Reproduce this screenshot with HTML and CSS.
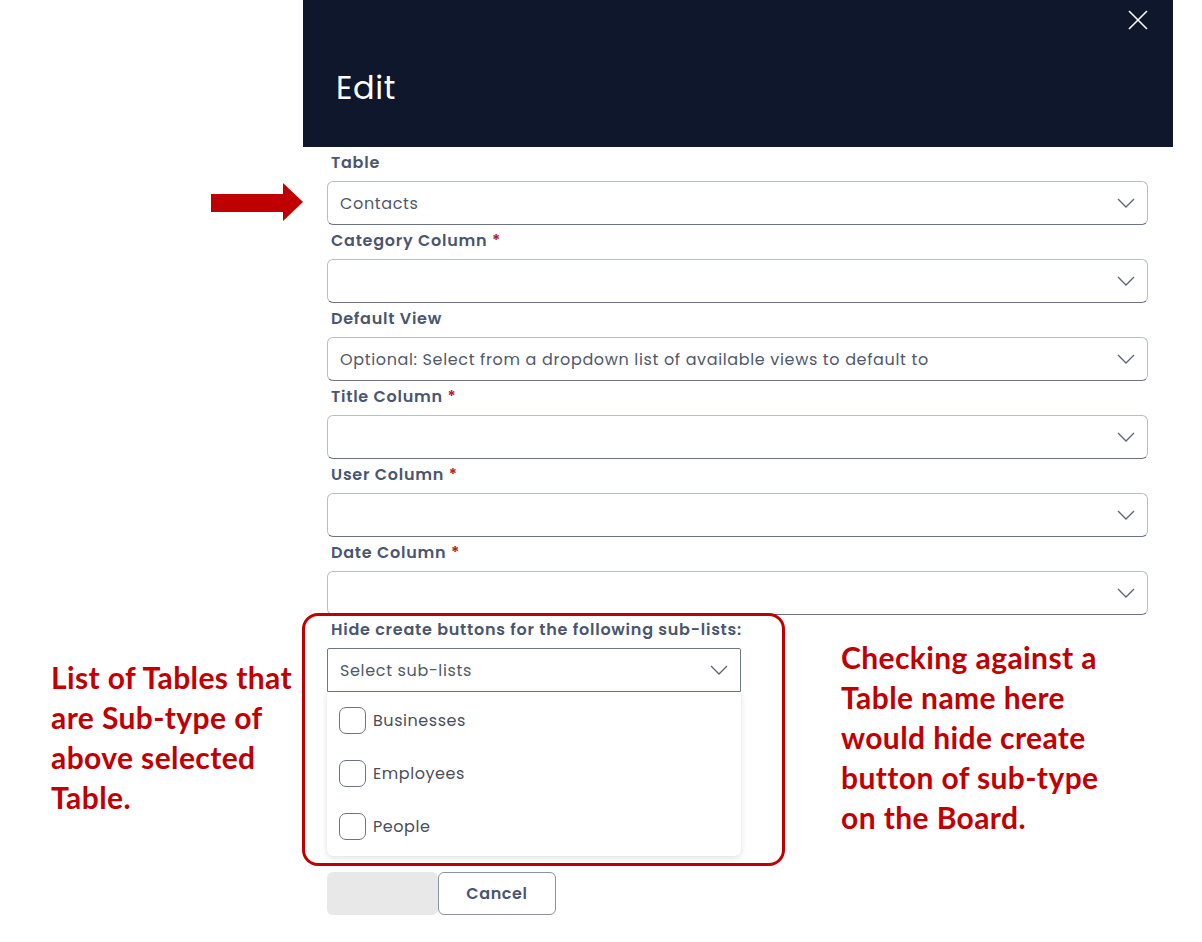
FILE: index.html
```html
<!DOCTYPE html>
<html>
<head>
<meta charset="utf-8">
<link rel="stylesheet" href="styles.css">
</head>
<body>
<div class="page">
  <div class="gutter">
    <div class="arrow"><span class="shaft"></span><span class="head"></span></div>
    <div class="note note-left">List of Tables that<br>are Sub-type of<br>above selected<br>Table.</div>
  </div>
  <div class="drawer">
    <header class="drawer-head">
      <h1 class="title">Edit</h1>
      <button class="close" aria-label="Close">
        <svg width="20" height="20" viewBox="0 0 20 20"><path d="M1 1 L19 19 M19 1 L1 19" stroke="#ffffff" stroke-width="1.6" fill="none"/></svg>
      </button>
    </header>
    <div class="drawer-body">
      <div class="field">
        <label class="label">Table</label>
        <div class="select"><span class="value">Contacts</span><svg class="chev" width="18" height="10" viewBox="0 0 18 10"><path d="M1 1 L9 9 L17 1" stroke="#5b6478" stroke-width="1.3" fill="none"/></svg></div>
      </div>
      <div class="field">
        <label class="label">Category Column <span class="req">*</span></label>
        <div class="select"><span class="value"></span><svg class="chev" width="18" height="10" viewBox="0 0 18 10"><path d="M1 1 L9 9 L17 1" stroke="#5b6478" stroke-width="1.3" fill="none"/></svg></div>
      </div>
      <div class="field">
        <label class="label">Default View</label>
        <div class="select"><span class="value">Optional: Select from a dropdown list of available views to default to</span><svg class="chev" width="18" height="10" viewBox="0 0 18 10"><path d="M1 1 L9 9 L17 1" stroke="#5b6478" stroke-width="1.3" fill="none"/></svg></div>
      </div>
      <div class="field">
        <label class="label">Title Column <span class="req">*</span></label>
        <div class="select"><span class="value"></span><svg class="chev" width="18" height="10" viewBox="0 0 18 10"><path d="M1 1 L9 9 L17 1" stroke="#5b6478" stroke-width="1.3" fill="none"/></svg></div>
      </div>
      <div class="field">
        <label class="label">User Column <span class="req">*</span></label>
        <div class="select"><span class="value"></span><svg class="chev" width="18" height="10" viewBox="0 0 18 10"><path d="M1 1 L9 9 L17 1" stroke="#5b6478" stroke-width="1.3" fill="none"/></svg></div>
      </div>
      <div class="field">
        <label class="label">Date Column <span class="req">*</span></label>
        <div class="select"><span class="value"></span><svg class="chev" width="18" height="10" viewBox="0 0 18 10"><path d="M1 1 L9 9 L17 1" stroke="#5b6478" stroke-width="1.3" fill="none"/></svg></div>
      </div>
      <div class="field field-sub">
        <div class="highlight"></div>
        <label class="label">Hide create buttons for the following sub-lists:</label>
        <div class="select select-open"><span class="value">Select sub-lists</span><svg class="chev" width="18" height="10" viewBox="0 0 18 10"><path d="M1 1 L9 9 L17 1" stroke="#5b6478" stroke-width="1.3" fill="none"/></svg></div>
        <ul class="menu">
          <li class="opt"><span class="box"></span>Businesses</li>
          <li class="opt"><span class="box"></span>Employees</li>
          <li class="opt"><span class="box"></span>People</li>
        </ul>
      </div>
      <div class="actions">
        <button class="btn btn-save"></button>
        <button class="btn btn-cancel">Cancel</button>
      </div>
    </div>
  </div>
  <div class="note note-right">Checking against a<br>Table name here<br>would hide create<br>button of sub-type<br>on the Board.</div>
</div>
</body>
</html>
```
FILE: styles.css
```css
* { box-sizing: border-box; }
html, body { margin: 0; padding: 0; background: #ffffff; }
body { font-family: "Poppins", "Open Sans", "Noto Sans", sans-serif; width: 1202px; height: 942px; overflow: hidden; }

.page { position: relative; display: flex; width: 1202px; height: 942px; }
.gutter { width: 303px; flex: none; position: relative; }
.drawer { width: 870px; flex: none; }

.arrow { position: absolute; left: 210px; top: 183px; width: 93px; height: 39px; }
.arrow .shaft { position: absolute; left: 1px; top: 11px; width: 74px; height: 18px; background: #c00000; }
.arrow .head { position: absolute; left: 73px; top: 0; width: 0; height: 0; border-top: 19.5px solid transparent; border-bottom: 19.5px solid transparent; border-left: 20px solid #c00000; }

.note { position: absolute; font-family: "Lato", "Open Sans", sans-serif; font-weight: 700; color: #c00000; font-size: 30px; line-height: 40px; letter-spacing: 0.4px; }
.note-left { left: 51px; top: 657px; }
.note-right { left: 841px; top: 637px; }

.drawer-head { height: 147px; background: #0e172b; position: relative; display: flex; align-items: flex-end; padding: 0 0 39px 33px; }
.title { margin: 0; color: #ffffff; font-weight: 400; font-size: 32px; line-height: 40px; letter-spacing: 0.6px; }
.close { position: absolute; top: 9px; right: 24px; width: 22px; height: 22px; padding: 0; border: 0; background: transparent; display: flex; align-items: center; justify-content: center; }

.drawer-body { padding: 4px 25px 0 24px; display: flex; flex-direction: column; gap: 4px; }
.field { display: flex; flex-direction: column; position: relative; }
.label { display: block; margin: 0 0 6px 4px; font-size: 16px; line-height: 24px; font-weight: 600; color: #4b5670; letter-spacing: 0.75px; white-space: nowrap; }
.req { color: #b0202a; }

.select { height: 44px; border: 1px solid #b8bdc8; border-bottom-color: #6b7487; border-radius: 6px; display: flex; align-items: center; justify-content: space-between; padding: 0 12px 0 12px; background: #fff; }
.value { font-size: 16px; color: #4f596b; letter-spacing: 0.65px; white-space: nowrap; }
.chev { flex: none; }

.field-sub { width: 414px; margin-top: -1px; }
.select-open { border-color: #6d768a; border-radius: 2px 2px 0 0; }
.highlight { position: absolute; left: -25px; top: -5px; width: 483px; height: 253px; border: 3px solid #c00000; border-radius: 16px; pointer-events: none; }

.menu { list-style: none; margin: 0; padding: 2px 0 3px 0; background: #fff; border-radius: 0 0 6px 6px; box-shadow: 0 2px 6px rgba(0,0,0,0.12), 0 0 1px rgba(0,0,0,0.08); }
.opt { height: 53px; display: flex; align-items: center; gap: 7px; padding-left: 12px; font-size: 16px; color: #4a4f5a; letter-spacing: 0.55px; }
.box { width: 27px; height: 27px; border: 1px solid #6b7487; border-radius: 7px; flex: none; }

.actions { display: flex; margin-top: 12px; }
.btn { height: 43px; border-radius: 6px; font-family: inherit; font-size: 16px; font-weight: 600; letter-spacing: 0.6px; }
.btn-save { width: 111px; background: #e8e8e8; border: 0; }
.btn-cancel { width: 118px; background: #fff; border: 1px solid #8a92a3; color: #4b5670; }
```
